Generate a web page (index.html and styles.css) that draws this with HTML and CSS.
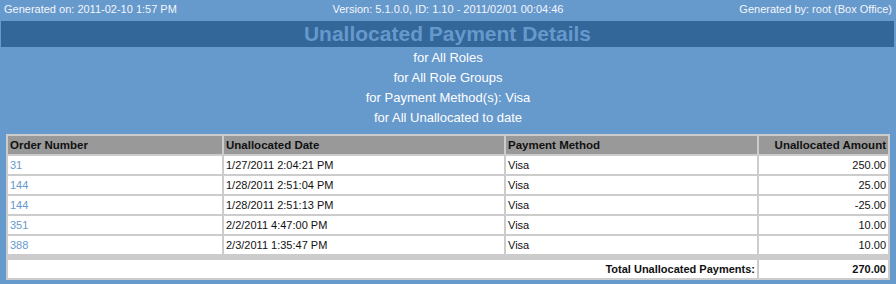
FILE: index.html
```html
<!DOCTYPE html>
<html lang="en">
<head>
    <meta charset="UTF-8">
    <title>Unallocated Payment Details</title>
    <link rel="stylesheet" href="styles.css">
</head>
<body>
    <div class="report-info">
        <span class="info-left">Generated on: 2011-02-10 1:57 PM</span>
        <span class="info-center">Version: 5.1.0.0, ID: 1.10 - 2011/02/01 00:04:46</span>
        <span class="info-right">Generated by: root (Box Office)</span>
    </div>
    <div class="report-title">Unallocated Payment Details</div>
    <div class="report-filters">
        <div>for All Roles</div>
        <div>for All Role Groups</div>
        <div>for Payment Method(s): Visa</div>
        <div>for All Unallocated to date</div>
    </div>
    <table class="report-table">
        <colgroup>
            <col class="col-order">
            <col class="col-date">
            <col class="col-method">
            <col>
        </colgroup>
        <thead>
            <tr>
                <th>Order Number</th>
                <th>Unallocated Date</th>
                <th>Payment Method</th>
                <th class="num">Unallocated Amount</th>
            </tr>
        </thead>
        <tbody>
            <tr>
                <td><a href="#">31</a></td>
                <td>1/27/2011 2:04:21 PM</td>
                <td>Visa</td>
                <td class="num">250.00</td>
            </tr>
            <tr>
                <td><a href="#">144</a></td>
                <td>1/28/2011 2:51:04 PM</td>
                <td>Visa</td>
                <td class="num">25.00</td>
            </tr>
            <tr>
                <td><a href="#">144</a></td>
                <td>1/28/2011 2:51:13 PM</td>
                <td>Visa</td>
                <td class="num">-25.00</td>
            </tr>
            <tr>
                <td><a href="#">351</a></td>
                <td>2/2/2011 4:47:00 PM</td>
                <td>Visa</td>
                <td class="num">10.00</td>
            </tr>
            <tr>
                <td><a href="#">388</a></td>
                <td>2/3/2011 1:35:47 PM</td>
                <td>Visa</td>
                <td class="num">10.00</td>
            </tr>
            <tr class="spacer">
                <td colspan="4"></td>
            </tr>
            <tr class="total">
                <td colspan="3" class="num">Total Unallocated Payments:</td>
                <td class="num">270.00</td>
            </tr>
        </tbody>
    </table>
</body>
</html>
```

FILE: styles.css
```css
body {
    font-family: "Liberation Sans", Arial, sans-serif;
    margin: 0;
    padding: 0;
    background-color: #6699cc;
    color: #fff;
}

.report-info {
    display: grid;
    grid-template-columns: 1fr auto 1fr;
    height: 21px;
    line-height: 18px;
    padding: 0 4px;
    font-size: 11px;
    color: #f4f6fb;
}

.info-center {
    text-align: center;
}

.info-right {
    text-align: right;
}

.report-title {
    margin: 0 2px 0 1px;
    height: 26px;
    line-height: 26px;
    background-color: #336699;
    color: #6699cc;
    font-size: 21px;
    font-weight: bold;
    text-align: center;
}

.report-filters {
    margin-top: 1px;
    font-size: 13px;
    line-height: 20px;
    text-align: center;
}

.report-table {
    margin: 6px 0 0 6px;
    width: 884px;
    table-layout: fixed;
    border-collapse: separate;
    border-spacing: 2px;
    background-color: #cccccc;
    font-size: 11px;
    color: #111;
}

.col-order {
    width: 214px;
}

.col-date {
    width: 280px;
}

.col-method {
    width: 251px;
}

.report-table th,
.report-table td {
    height: 14px;
    padding: 2px;
    line-height: 14px;
    text-align: left;
    white-space: nowrap;
}

.report-table th {
    background-color: #999999;
    font-weight: bold;
    font-size: 11.5px;
}

.report-table td {
    background-color: #fff;
}

.report-table .num {
    text-align: right;
}

.report-table a {
    color: #6699cc;
    text-decoration: none;
}

.report-table .spacer td {
    height: 2px;
    padding: 0;
    background-color: #cccccc;
}

.report-table .total td {
    font-weight: bold;
}
```
